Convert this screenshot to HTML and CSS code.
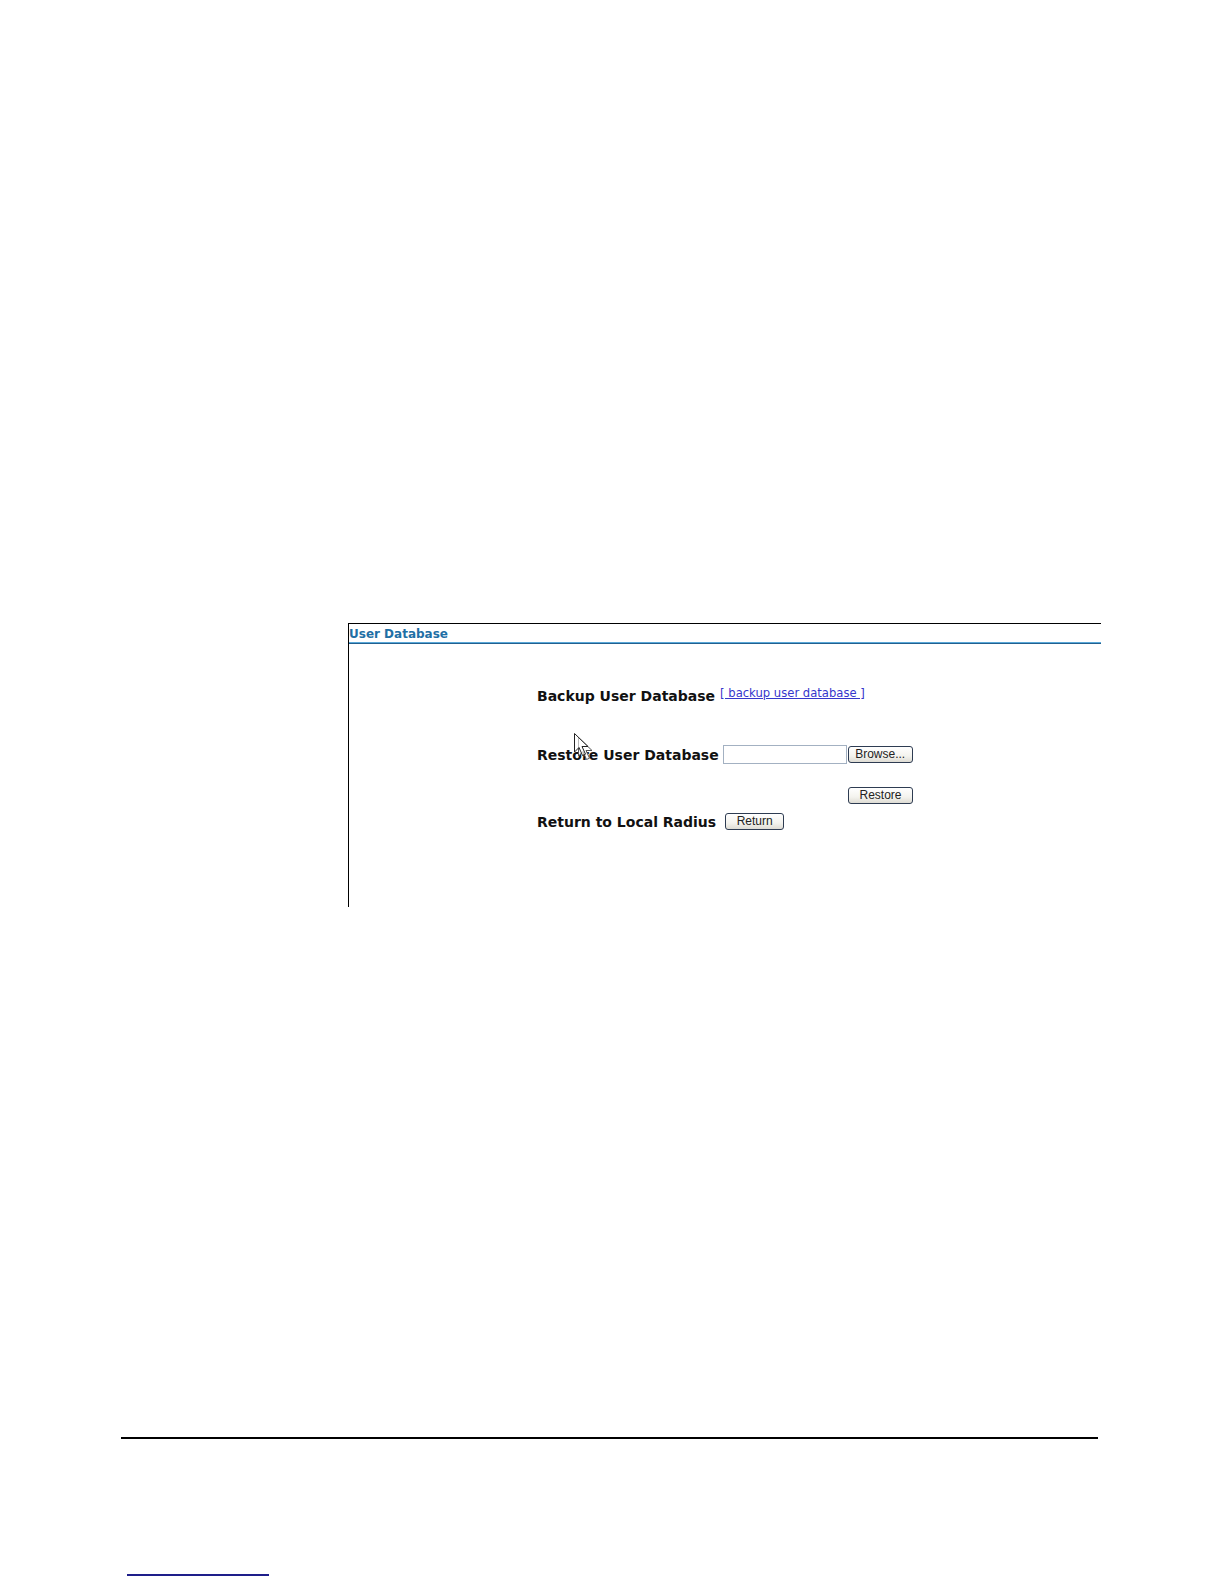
FILE: index.html
```html
<!DOCTYPE html>
<html lang="en">
<head>
<meta charset="utf-8">
<title>User Database</title>
<link rel="stylesheet" href="styles.css">
</head>
<body>
<div class="page">
  <div class="panel">
    <div class="panel-title">User Database</div>
    <div class="panel-rule"></div>
    <div class="form">
      <div class="row row-backup">
        <span class="label">Backup User Database</span>
        <a class="link" href="#">[ backup user database ]</a>
      </div>
      <div class="row row-restore">
        <span class="label">Restore User Database</span>
        <span class="file-input"></span>
        <button class="btn btn-browse" type="button">Browse...</button>
      </div>
      <div class="row row-restore-btn">
        <button class="btn btn-restore" type="button">Restore</button>
      </div>
      <div class="row row-return">
        <span class="label">Return to Local Radius</span>
        <button class="btn btn-return" type="button">Return</button>
      </div>
    </div>
    <svg class="cursor" width="30" height="32" viewBox="0 0 30 32" aria-hidden="true">
      <path d="M5.5 4.5 L5.5 23 L10 18.5 L13.5 26.5 L16.5 25.2 L13 17.5 L19 17.5 Z" fill="#fff" stroke="#555" stroke-width="1" stroke-linejoin="round"/>
      <path d="M1.5 0.5 L1.5 19 L6 14.5 L9.5 22.5 L12.5 21.2 L9 13.5 L15 13.5 Z" fill="rgba(255,255,255,0.6)" stroke="#222" stroke-width="1" stroke-linejoin="round"/>
    </svg>
  </div>
  <div class="footer-rule"></div>
  <div class="footnote-rule"></div>
</div>
</body>
</html>
```

FILE: styles.css
```css
html, body {
  margin: 0;
  padding: 0;
  background: #fff;
}

.page {
  padding-top: 623px;
  font-family: "DejaVu Sans", Verdana, sans-serif;
  color: #111;
}

.panel {
  position: relative;
  box-sizing: border-box;
  margin-left: 348px;
  width: 753px;
  height: 284px;
  border-top: 1px solid #000;
  border-left: 1px solid #000;
}

.panel-title {
  height: 18px;
  padding-top: 2px;
  box-sizing: border-box;
  font-size: 12px;
  line-height: 16px;
  font-weight: bold;
  color: #1f6fa5;
}

.panel-rule {
  height: 0;
  border-top: 1px solid #5aa8d8;
  border-bottom: 1px solid #22608f;
}

.form {
  padding-left: 188px;
  padding-top: 44px;
}

.row {
  display: flex;
}

.label {
  font-size: 14px;
  line-height: 16px;
  font-weight: bold;
  color: #111;
  white-space: nowrap;
}

.row-backup {
  align-items: flex-start;
  height: 16px;
}

.link {
  margin-left: 5px;
  margin-top: -2px;
  font-size: 11.6px;
  line-height: 14px;
  color: #3636cc;
  text-decoration: underline;
  white-space: nowrap;
}

.row-restore {
  margin-top: 41px;
  height: 19px;
  align-items: center;
}

.file-input {
  box-sizing: border-box;
  width: 124px;
  height: 19px;
  margin-left: 4px;
  border: 1px solid #a3b1c2;
  background: #fff;
}

.btn {
  box-sizing: border-box;
  height: 17px;
  padding: 0;
  border: 1px solid #2e3c52;
  border-radius: 3px;
  background: linear-gradient(#ffffff, #f4f3ee 60%, #dedcd4);
  font-family: "Liberation Sans", Arial, sans-serif;
  font-size: 12px;
  line-height: 15px;
  color: #222;
  text-align: center;
}

.btn-browse {
  width: 65px;
  margin-left: 1px;
}

.row-restore-btn {
  margin-top: 23px;
  height: 17px;
}

.btn-restore {
  width: 65px;
  margin-left: 311px;
}

.row-return {
  margin-top: 9px;
  height: 17px;
  align-items: center;
}

.btn-return {
  width: 59px;
  height: 17px;
  margin-left: 9px;
}

.cursor {
  position: absolute;
  left: 224px;
  top: 109px;
}

.footer-rule {
  margin-top: 530px;
  margin-left: 121px;
  width: 977px;
  height: 2px;
  background: #000;
}

.footnote-rule {
  margin-top: 135px;
  margin-left: 127px;
  width: 142px;
  height: 2px;
  background: #1e1e8a;
}
```
